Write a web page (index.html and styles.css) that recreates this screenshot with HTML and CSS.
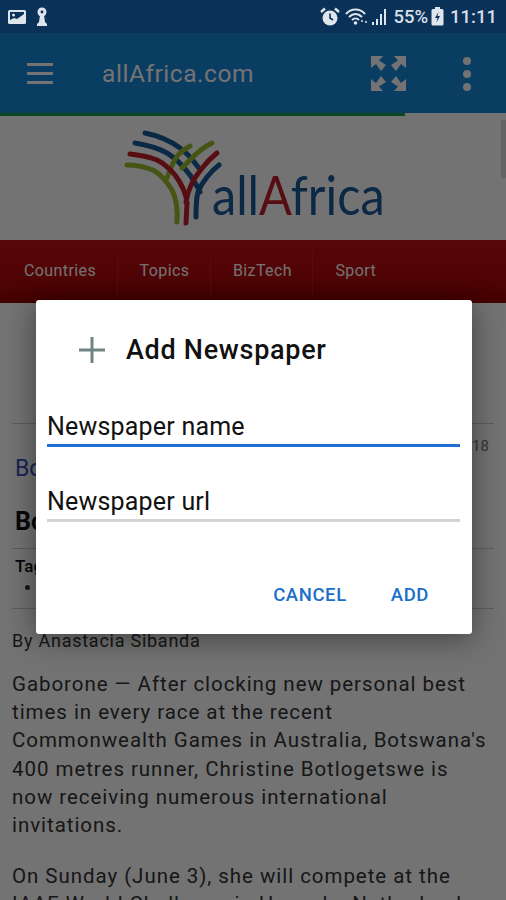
FILE: index.html
```html
<!DOCTYPE html>
<html lang="en">
<head>
    <meta charset="UTF-8">
    <meta name="viewport" content="width=device-width, initial-scale=1.0">
    <title>allAfrica.com</title>
    <link rel="stylesheet" href="styles.css">
</head>
<body>
    <div class="status-bar">
        <div class="status-left">
            <svg width="20" height="18" viewBox="0 0 20 18">
                <rect x="1" y="2" width="18" height="14" rx="1.5" fill="#dfe5ec"/>
                <rect x="3" y="4" width="14" height="10" fill="#0a3158"/>
                <circle cx="6.5" cy="7" r="1.5" fill="#dfe5ec"/>
                <path d="M3 14 L3 12 L7 10 L10 11 L17 6 L17 14 Z" fill="#dfe5ec"/>
            </svg>
            <svg width="14" height="20" viewBox="0 0 14 20">
                <circle cx="7" cy="5" r="4.5" fill="#dfe5ec"/>
                <path d="M5 8 L9 8 L10 15 L12 17 L12 19 L2 19 L2 17 L4 15 Z" fill="#dfe5ec"/>
                <circle cx="7" cy="5" r="1.4" fill="#0a3158"/>
            </svg>
        </div>
        <div class="status-right">
            <svg width="20" height="20" viewBox="0 0 20 20">
                <circle cx="10" cy="11" r="7.5" fill="#dfe5ec"/>
                <path d="M10 6.5 V11 L13 13" fill="none" stroke="#0a3158" stroke-width="1.6"/>
                <path d="M1 5 L5 1.5 M19 5 L15 1.5" stroke="#dfe5ec" stroke-width="2.4"/>
            </svg>
            <svg class="wifi" width="25" height="20" viewBox="0 0 25 20">
                <path d="M1 7 C6 1 15 1 20 7 M4 10 C8 6 13 6 17 10 M7 13 C9 11 12 11 14 13" fill="none" stroke="#dfe5ec" stroke-width="2"/>
                <circle cx="10.5" cy="16" r="1.8" fill="#dfe5ec"/>
                <circle cx="17" cy="14" r="1" fill="#dfe5ec"/>
                <circle cx="21" cy="15" r="1" fill="#dfe5ec"/>
            </svg>
            <svg width="15" height="18" viewBox="0 0 15 18">
                <rect x="0" y="14" width="2" height="3" fill="#dfe5ec"/>
                <rect x="4" y="11" width="2" height="6" fill="#dfe5ec"/>
                <rect x="8" y="6" width="2" height="11" fill="#dfe5ec"/>
                <rect x="12" y="1" width="2" height="16" fill="#dfe5ec"/>
            </svg>
            <span class="status-text battery-text">55%</span>
            <svg class="battery" width="13" height="19" viewBox="0 0 13 19">
                <rect x="4" y="0" width="5" height="3" fill="#dfe5ec"/>
                <rect x="0.5" y="2" width="12" height="16.5" rx="1.5" fill="#dfe5ec"/>
                <path d="M7.5 5 L4 11 H6.5 L5.5 15.5 L9 9 H6.5 Z" fill="#0a3158"/>
            </svg>
            <span class="status-text time-text">11:11</span>
        </div>
    </div>

    <div class="app">
        <header class="app-bar">
            <div class="menu-icon"><span></span><span></span><span></span></div>
            <div class="app-title">allAfrica.com</div>
            <svg class="expand-icon" width="35" height="35" viewBox="0 0 35 35">
                <path d="M0 0 H12 L8 4.5 L15 9 L10 15 L5 8 L0 12 Z"/>
                <path d="M35 0 H23 L27 4.5 L20 9 L25 15 L30 8 L35 12 Z"/>
                <path d="M0 35 H12 L8 30.5 L15 26 L10 20 L5 27 L0 23 Z"/>
                <path d="M35 35 H23 L27 30.5 L20 26 L25 20 L30 27 L35 23 Z"/>
            </svg>
            <div class="more-icon"><span></span><span></span><span></span></div>
            <div class="progress"></div>
        </header>

        <main class="page">
            <div class="scroll-thumb"></div>
            <div class="logo-row">
                <svg class="logo" width="87" height="100" viewBox="125 128 87 100">
                    <g fill="none" stroke-width="5" stroke-linecap="round">
                        <path class="l-blue" d="M145 133 C160 136 172 142 180 148 C187 153 193 160 198 167"/>
                        <path class="l-blue" d="M135 143 C147 145 158 148 167 153 C177 159 184 167 190 175 C194 181 198 187 200 192"/>
                        <path class="l-green" d="M190 146 C184 149 181 152 178 155 C173 161 170 170 167 178"/>
                        <path class="l-green" d="M212 143 C204 147 198 152 193 157 C189 161 185 165 182 168"/>
                        <path class="l-red" d="M130 154 C140 155 149 157 157 160 C165 164 170 169 175 175 C181 183 186 193 187 203 L186 223"/>
                        <path class="l-green" d="M127 165 C136 165 145 167 153 170 C161 174 167 182 172 190 C176 198 178 208 177 222"/>
                        <path class="l-red" d="M217 153 C212 157 207 162 203 167 C199 172 195 177 192 183 C189 189 187 195 186 202"/>
                        <path class="l-blue" d="M219 165 C215 168 211 172 207 177 C203 182 200 187 198 192 C196 199 196 208 196 217"/>
                    </g>
                </svg>
                <div class="logo-text">all<span class="logo-a">A</span>frica</div>
            </div>

            <nav class="main-nav">
                <a class="nav-item nav-first">Countries</a>
                <a class="nav-item">Topics</a>
                <a class="nav-item">BizTech</a>
                <a class="nav-item nav-last">Sport</a>
            </nav>

            <article class="article">
                <div class="date-row">3 June 2018</div>
                <div class="section-link">Botswana</div>
                <h1 class="headline">Botswana's Botlogetswe</h1>
                <div class="tags">
                    <div class="tags-title">Tags</div>
                    <ul>
                        <li>Botswana</li>
                    </ul>
                </div>
                <div class="byline">By Anastacia Sibanda</div>
                <p>Gaborone &mdash; After clocking new personal best times in every race at the recent Commonwealth Games in Australia, Botswana's 400 metres runner, Christine Botlogetswe is now receiving numerous international invitations.</p>
                <p>On Sunday (June 3), she will compete at the IAAF World Challenge in Hengelo, Netherlands.</p>
            </article>
        </main>

        <div class="scrim"></div>

        <div class="dialog">
            <div class="dialog-title">
                <svg class="plus-icon" width="28" height="28" viewBox="0 0 28 28">
                    <path d="M14 1 V27 M1 14 H27" stroke="#6f8583" stroke-width="3" fill="none"/>
                </svg>
                <span>Add Newspaper</span>
            </div>
            <div class="field field-active">Newspaper name</div>
            <div class="field">Newspaper url</div>
            <div class="dialog-actions">
                <button type="button">CANCEL</button>
                <button type="button">ADD</button>
            </div>
        </div>
    </div>
</body>
</html>
```

FILE: styles.css
```css
* {
    box-sizing: border-box;
}

html, body {
    height: 100%;
}

body {
    margin: 0;
    height: 900px;
    overflow: hidden;
    font-family: Roboto, "Liberation Sans", sans-serif;
    background-color: #fff;
}

/* status bar sits above the dim layer */
.status-bar {
    height: 33px;
    padding: 0 9px 0 7px;
    display: flex;
    align-items: center;
    justify-content: space-between;
    background-color: #0a3158;
}

.status-left, .status-right {
    display: flex;
    align-items: center;
}

.status-left {
    gap: 8px;
}

.status-right {
    gap: 2px;
}

.wifi {
    margin-left: 3px;
}

.status-text {
    color: #d8dfe8;
    font-size: 18.5px;
    font-weight: 500;
}

.battery-text {
    margin-left: 4px;
}

.battery {
    margin-left: 1px;
}

.time-text {
    margin-left: 4px;
}

.app {
    position: relative;
    height: 867px;
    overflow: hidden;
}

.app-bar {
    position: relative;
    height: 83px;
    display: flex;
    align-items: center;
    padding: 0 0 2px 27px;
    background-color: #1687da;
}

.menu-icon {
    width: 26px;
    display: flex;
    flex-direction: column;
    gap: 6px;
}

.menu-icon span {
    display: block;
    height: 3px;
    background-color: #fff;
}

.app-title {
    margin-left: 49px;
    width: 269px;
    color: #fff;
    font-size: 24.5px;
    letter-spacing: 0.55px;
}

.expand-icon {
    fill: #fff;
}

.more-icon {
    margin-left: 57px;
    display: flex;
    flex-direction: column;
    gap: 5px;
}

.more-icon span {
    display: block;
    width: 8px;
    height: 8px;
    border-radius: 50%;
    background-color: #fff;
}

.progress {
    position: absolute;
    left: 0;
    bottom: 0;
    width: 405px;
    height: 3px;
    background-color: #16a04a;
}

.app-bar::after {
    content: "";
    position: absolute;
    left: 405px;
    right: 0;
    bottom: 0;
    height: 3px;
    background-color: #fff;
}

.page {
    position: relative;
    background-color: #fff;
}

.scroll-thumb {
    position: absolute;
    top: 4px;
    right: 0;
    width: 5px;
    height: 58px;
    background-color: #ddd;
}

.logo-row {
    height: 124px;
    display: flex;
    padding: 12px 0 0 125px;
}

.logo {
    overflow: visible;
}

.l-blue {
    stroke: #1a5a9a;
}

.l-red {
    stroke: #c11f2c;
}

.l-green {
    stroke: #9bbb2e;
}

.logo-text {
    font-family: Lato, sans-serif;
    font-size: 54px;
    line-height: 62px;
    padding-top: 36px;
    color: #1a5a9a;
    white-space: nowrap;
    transform: scaleX(0.9);
    transform-origin: left;
}

.logo-a {
    color: #c11f2c;
}

.main-nav {
    height: 63px;
    display: flex;
    align-items: center;
    background: linear-gradient(#c40d12, #b20a0c 60%, #960202);
}

.nav-item {
    height: 46px;
    display: flex;
    align-items: center;
    padding: 0 20.5px 2px 22px;
    color: #fff;
    font-size: 16px;
    letter-spacing: 0.4px;
    border-right: 1px solid #bf1a1e;
}

.nav-first {
    padding-left: 24px;
}

.nav-last {
    border-right: none;
}

.article {
    padding: 120px 12px 0;
    color: #333;
}

.date-row {
    height: 31px;
    padding: 13px 5px 0 0;
    border-top: 1px solid #ccc;
    text-align: right;
    font-size: 15px;
    color: #777;
}

.section-link {
    margin-top: 1px;
    padding-left: 3px;
    font-size: 23px;
    line-height: 28px;
    color: #2a52be;
}

.headline {
    margin: 24px 0 0;
    padding-left: 3px;
    font-size: 25px;
    line-height: 30px;
    color: #111;
}

.tags {
    margin-top: 11px;
    height: 61px;
    padding: 7px 0 0 3px;
    border-top: 1px solid #ccc;
    border-bottom: 1px solid #ccc;
}

.tags-title {
    font-size: 17px;
    line-height: 20px;
    font-weight: 500;
    color: #111;
}

.tags ul {
    margin: 0;
    padding-left: 26px;
    font-size: 15px;
    line-height: 22px;
}

.byline {
    margin-top: 20px;
    font-size: 18px;
    line-height: 24px;
    letter-spacing: 0.75px;
}

.article p {
    margin: 17px 0 0;
    padding-right: 4px;
    font-size: 20.5px;
    line-height: 28.2px;
    letter-spacing: 0.95px;
    color: #333;
}

.article p + p {
    margin-top: 23px;
}

.scrim {
    position: absolute;
    inset: 0;
    background-color: rgba(0, 0, 0, 0.55);
}

.dialog {
    position: absolute;
    top: 267px;
    left: 36px;
    width: 436px;
    height: 334px;
    padding: 0 12px 0 11px;
    background-color: #fff;
    border-radius: 3px;
    box-shadow: 0 4px 30px rgba(0, 0, 0, 0.45);
}

.dialog-title {
    height: 100px;
    padding-left: 31px;
    display: flex;
    align-items: center;
    color: #111;
    font-size: 27px;
    font-weight: 500;
    letter-spacing: 0.7px;
}

.plus-icon {
    margin-right: 20px;
}

.field {
    height: 47px;
    margin-bottom: 28px;
    padding-top: 12px;
    border-bottom: 3px solid #d4d4d4;
    color: #111;
    font-size: 25px;
    line-height: 30px;
    letter-spacing: 0.2px;
}

.field-active {
    border-bottom-color: #1f6fd6;
}

.dialog-actions {
    margin-top: 62px;
    display: flex;
    justify-content: flex-end;
    gap: 44px;
    padding-right: 31px;
}

.dialog-actions button {
    padding: 0;
    border: none;
    background: none;
    color: #1a6fc9;
    font-family: inherit;
    font-size: 18.5px;
    font-weight: 500;
    letter-spacing: 0.6px;
    cursor: pointer;
}
```
